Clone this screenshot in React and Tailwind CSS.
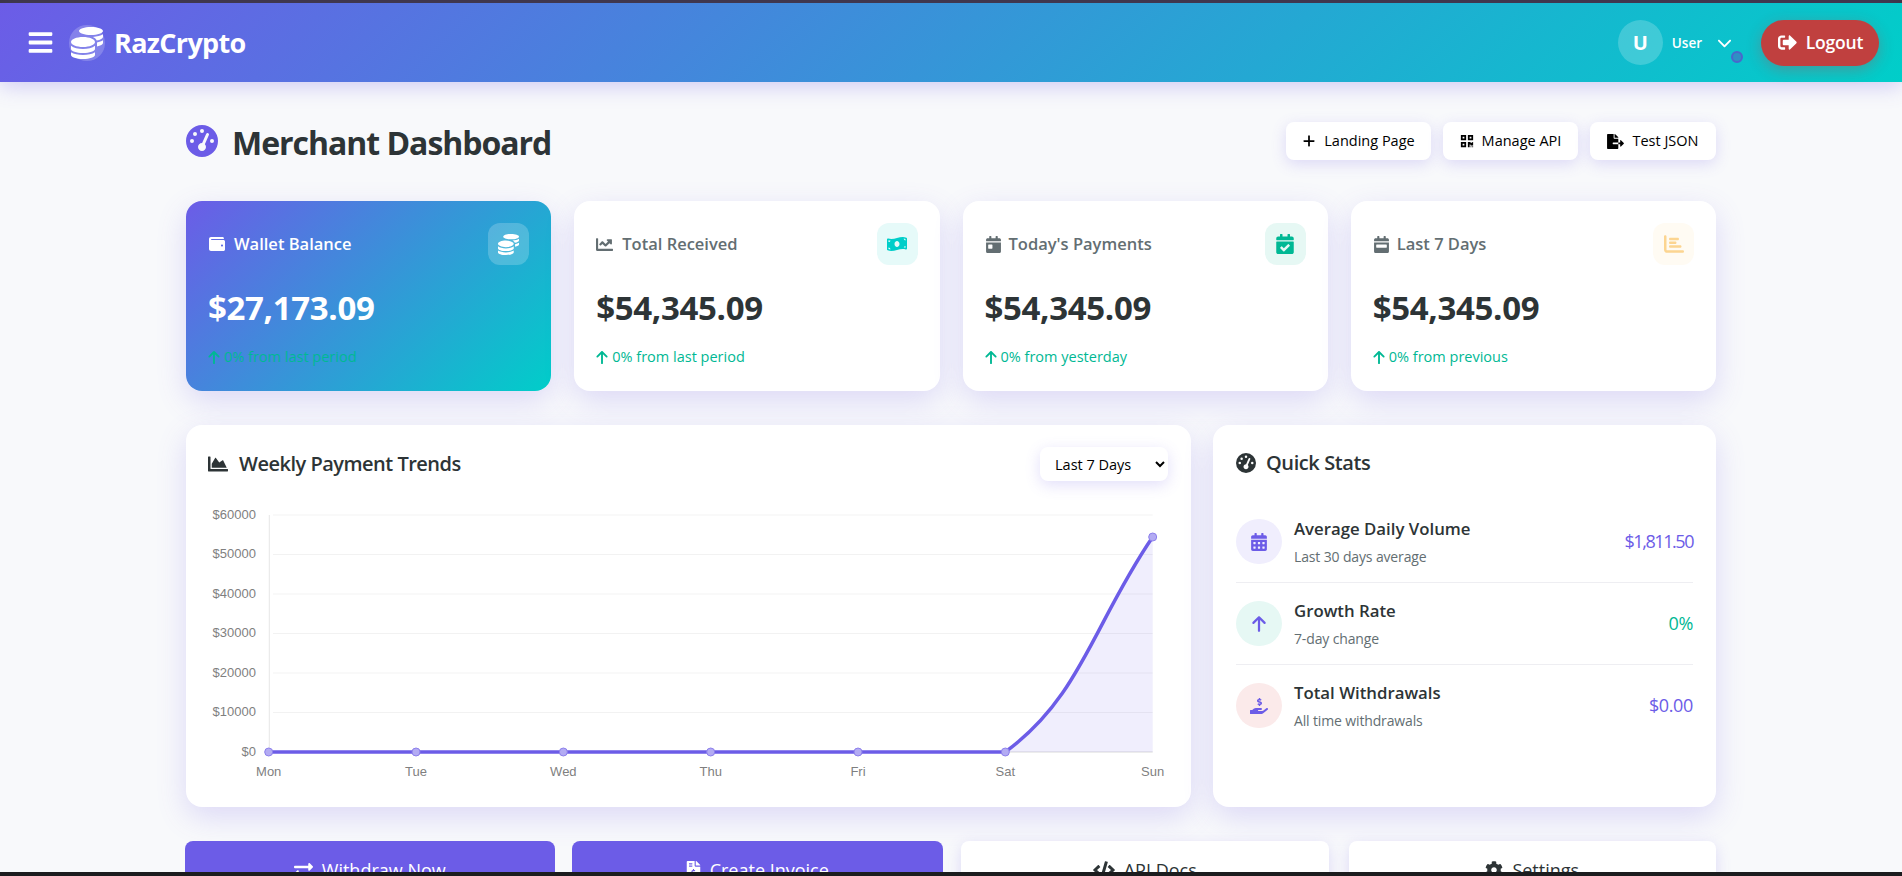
import { FaBars, FaCoins, FaSignOutAlt, FaQrcode, FaFileExport, FaWallet, FaChartLine, FaMoneyBillWave, FaCalendarDay, FaCalendarCheck, FaCalendarWeek, FaChartArea, FaCalendarAlt, FaHandHoldingUsd, FaExchangeAlt, FaFileInvoiceDollar, FaCode, FaCog } from 'react-icons/fa'
import { FaArrowUp, FaChevronDown, FaGaugeHigh, FaPlus, FaChartBar } from 'react-icons/fa6'

const statCards = [
  { label: "Total Received", Icon: FaChartLine, gap: 'gap-[9px]', BoxIcon: FaMoneyBillWave, box: 'bg-[#e6faf9] text-[#00cec9]', value: '$54,345.09', note: '0% from last period' },
  { label: "Today's Payments", Icon: FaCalendarDay, gap: 'gap-[7px]', BoxIcon: FaCalendarCheck, box: 'bg-[#e6f8f4] text-[#00b894]', value: '$54,345.09', note: '0% from yesterday' },
  { label: 'Last 7 Days', Icon: FaCalendarWeek, gap: 'gap-[7px]', BoxIcon: FaChartBar, box: 'bg-[#fffbf3] text-[#fcd591]', value: '$54,345.09', note: '0% from previous' },
]

const quickStats = [
  { title: 'Average Daily Volume', sub: 'Last 30 days average', value: '$1,811.50', Icon: FaCalendarAlt, circle: 'bg-[#f0eefd]', valueColor: 'text-[#6c5ce7] tracking-[-0.08em]' },
  { title: 'Growth Rate', sub: '7-day change', value: '0%', Icon: FaArrowUp, circle: 'bg-[#e6f8f4]', valueColor: 'text-[#00b894] tracking-[-0.02em]' },
  { title: 'Total Withdrawals', sub: 'All time withdrawals', value: '$0.00', Icon: FaHandHoldingUsd, circle: 'bg-[#fbeaea]', valueColor: 'text-[#6c5ce7] tracking-[-0.02em]' },
]

const days = ['Mon', 'Tue', 'Wed', 'Thu', 'Fri', 'Sat', 'Sun']
const yTicks = ['$60000', '$50000', '$40000', '$30000', '$20000', '$10000', '$0']

function TrendChart() {
  const xs = days.map((_, i) => 268.7 + i * 147.33)
  return (
    <svg viewBox="208 500 960 290" className="block w-[960px] h-[290px] mt-[19px] overflow-visible">
      {yTicks.map((t, i) => {
        const y = 515 + i * 39.5
        return (
          <g key={t}>
            <line x1="273" x2="1152.7" y1={y} y2={y} stroke="rgba(0,0,0,0.05)" />
            <text x="256" y={y + 3.5} textAnchor="end" fontSize="13" fill="#7f7f7f" fontFamily="Liberation Sans, sans-serif">{t}</text>
          </g>
        )
      })}
      <line x1="269.3" x2="269.3" y1="515" y2="752" stroke="rgba(0,0,0,0.1)" />
      <line x1="269.3" x2="1152.7" y1="752" y2="752" stroke="rgba(0,0,0,0.1)" />
      <path d="M1005.3 752C1080.8 697 1093.7 623 1152.7 537V752Z" fill="rgba(108,92,231,0.1)" />
      <path d="M268.7 752H1005.3C1080.8 697 1093.7 623 1152.7 537" fill="none" stroke="#6c5ce7" strokeWidth="3.5" />
      {xs.map((x, i) => (
        <g key={days[i]}>
          <circle cx={x} cy={i === 6 ? 537 : 752} r="4" fill="#b3abf3" stroke="#8d80ec" strokeWidth="1" />
          <text x={x} y="775.5" textAnchor="middle" fontSize="13" fill="#7f7f7f" fontFamily="Liberation Sans, sans-serif">{days[i]}</text>
        </g>
      ))}
    </svg>
  )
}

export default function App() {
  return (
    <div className="h-screen overflow-hidden flex flex-col bg-[#f8f9fb] font-['Open_Sans','Noto_Sans',sans-serif] text-[#2d3436]">
      <div className="h-[3px] shrink-0 bg-[#3b3440]"></div>

      {/* Header */}
      <header className="h-[79px] shrink-0 flex items-center justify-between pl-[27px] pr-[23px] text-white bg-[linear-gradient(135deg,#6c5ce7,#00cec9)] shadow-[0_4px_20px_rgba(108,92,231,0.3)] relative z-10">
        <div className="flex items-center">
          <FaBars className="w-[27px] h-[27px]" />
          <div className="w-9 h-9 ml-[15px] rounded-full bg-white/20 flex items-center justify-center">
            <FaCoins className="w-[32px] h-[32px]" />
          </div>
          <span className="ml-[9px] mt-[1px] text-[27px] font-bold tracking-[-0.025em]">RazCrypto</span>
        </div>
        <div className="flex items-center">
          <div className="w-[45px] h-[45px] rounded-full bg-white/20 flex items-center justify-center text-[20px] font-bold">U</div>
          <span className="ml-[9px] mt-[1px] text-[13.5px] font-semibold">User</span>
          <div className="relative ml-[15px]">
            <FaChevronDown className="w-[15px] h-[15px]" />
            <span className="absolute left-[14px] top-[16px] w-3 h-3 rounded-full border-2 border-[#4a66cc] bg-[#2f8fc4]"></span>
          </div>
          <button className="ml-[29px] h-[46px] w-[118px] rounded-full bg-[#c0403f] shadow-[0_4px_15px_rgba(214,48,49,0.3)] flex items-center justify-center gap-[8px] text-[17.5px] font-semibold tracking-[-0.01em]">
            <FaSignOutAlt className="w-[21px] h-[19px]" />
            Logout
          </button>
        </div>
      </header>

      <main className="flex-1 overflow-hidden">
        <div className="w-[1530px] mx-auto pt-[40px]">
          {/* Title row */}
          <div className="flex items-center justify-between h-[38px] mb-[41px]">
            <div className="flex items-center">
              <FaGaugeHigh className="w-8 h-8 text-[#6c5ce7]" />
              <h1 className="ml-[14px] mt-[4px] text-[32px] font-bold tracking-[-0.032em]">Merchant Dashboard</h1>
            </div>
            <div className="flex gap-3 text-[14.5px] text-black">
              <button className="h-[38px] w-[145px] bg-white rounded-lg shadow-[0_4px_15px_rgba(108,92,231,0.2)] flex items-center justify-center gap-[8px]"><FaPlus className="w-[14px] h-[14px]" />Landing Page</button>
              <button className="h-[38px] w-[135px] bg-white rounded-lg shadow-[0_4px_15px_rgba(108,92,231,0.2)] flex items-center justify-center gap-[8px]"><FaQrcode className="w-[14px] h-[14px]" />Manage API</button>
              <button className="h-[38px] w-[126px] bg-white rounded-lg shadow-[0_4px_15px_rgba(108,92,231,0.2)] flex items-center justify-center gap-[8px]"><FaFileExport className="w-[17px] h-[15px]" />Test JSON</button>
            </div>
          </div>

          {/* Stat cards */}
          <div className="grid grid-cols-4 gap-[23px] mb-[34px]">
            <div className="h-[190px] rounded-2xl p-[22px] text-white bg-[linear-gradient(135deg,#6c5ce7,#00cec9)] shadow-[0_10px_30px_rgba(108,92,231,0.2)]">
              <div className="flex items-center justify-between h-[42px]">
                <div className="flex items-center gap-[8px] text-[16.5px] font-semibold"><FaWallet className="w-[18px] h-[16px]" />Wallet Balance</div>
                <div className="w-[41px] h-[42px] rounded-xl bg-white/20 flex items-center justify-center"><FaCoins className="w-[21px] h-[21px]" /></div>
              </div>
              <div className="mt-[24px] h-[38px] leading-[38px] text-[33px] font-bold tracking-[-0.01em]">$27,173.09</div>
              <div className="mt-[20px] h-[20px] flex items-center gap-[4px] text-[14.5px] text-[#00b894]"><FaArrowUp className="w-[12px] h-[15px]" />0% from last period</div>
            </div>
            {statCards.map(({ label, Icon, gap, BoxIcon, box, value, note }) => (
              <div key={label} className="h-[190px] rounded-2xl p-[22px] bg-white shadow-[0_10px_30px_rgba(108,92,231,0.2)]">
                <div className="flex items-center justify-between h-[42px]">
                  <div className={`flex items-center text-[16.5px] font-semibold text-[#636e72] ${gap}`}><Icon className="w-[17px] h-[17px]" />{label}</div>
                  <div className={`w-[41px] h-[42px] rounded-xl flex items-center justify-center ${box}`}><BoxIcon className="w-[20px] h-[20px]" /></div>
                </div>
                <div className="mt-[24px] h-[38px] leading-[38px] text-[33px] font-bold tracking-[-0.01em]">{value}</div>
                <div className="mt-[20px] h-[20px] flex items-center gap-[4px] text-[14.5px] text-[#00b894]"><FaArrowUp className="w-[12px] h-[15px]" />{note}</div>
              </div>
            ))}
          </div>

          {/* Chart + quick stats */}
          <div className="grid grid-cols-[1005px_503px] gap-[22px] mb-[34px]">
            <div className="h-[382px] rounded-2xl bg-white pt-[22px] pl-[22px] pr-[23px] shadow-[0_10px_30px_rgba(108,92,231,0.2)]">
              <div className="flex items-center justify-between h-[34px]">
                <h2 className="flex items-center gap-[11px] text-[20px] font-semibold tracking-[-0.025em]"><FaChartArea className="w-[20px] h-[20px]" />Weekly Payment Trends</h2>
                <select className="w-[128px] h-[34px] pl-[11px] rounded-lg bg-white text-[14.5px] text-black shadow-[0_4px_15px_rgba(108,92,231,0.2)]">
                  <option>Last 7 Days</option>
                </select>
              </div>
              <TrendChart />
            </div>

            <div className="h-[382px] rounded-2xl bg-white pt-[22px] pl-[23px] pr-[23px] shadow-[0_10px_30px_rgba(108,92,231,0.2)]">
              <h2 className="flex items-center gap-[10px] h-[32px] mb-[22px] text-[20px] font-semibold tracking-[-0.02em]"><FaGaugeHigh className="w-[20px] h-[20px]" />Quick Stats</h2>
              <div>
                {quickStats.map(({ title, sub, value, Icon, circle, valueColor }, i) => (
                  <div key={title} className={`flex items-center py-[18px] ${i < 2 ? 'border-b border-[#eeeef2]' : ''}`}>
                    <div className={`w-[46px] h-[45px] rounded-full flex items-center justify-center ${circle}`}><Icon className="w-[18px] h-[18px] text-[#6c5ce7]" /></div>
                    <div className="ml-[12px] h-[45px]">
                      <div className="h-[20px] leading-[20px] text-[16.8px] font-semibold">{title}</div>
                      <div className="mt-[9px] h-[18px] leading-[18px] text-[14px] tracking-[-0.01em] text-[#636e72]">{sub}</div>
                    </div>
                    <div className={`ml-auto text-[18px] font-medium ${valueColor}`}>{value}</div>
                  </div>
                ))}
              </div>
            </div>
          </div>

          {/* Action buttons */}
          <div className="grid grid-cols-4 gap-5">
            <button className="-mx-[1px] h-[58px] rounded-lg bg-[#6c5ce7] text-white flex items-center justify-center gap-[9px] text-[18px] font-medium"><FaExchangeAlt className="w-[19px] h-[19px]" />Withdraw Now</button>
            <button className="-mx-[1.5px] h-[58px] rounded-lg bg-[#6c5ce7] text-white flex items-center justify-center gap-[9px] text-[18px] font-medium"><FaFileInvoiceDollar className="w-[15px] h-[18px]" />Create Invoice</button>
            <button className="h-[58px] rounded-lg bg-white flex items-center justify-center gap-[9px] text-[18px] font-medium shadow-[0_4px_15px_rgba(108,92,231,0.2)]"><FaCode className="w-[22px] h-[18px]" />API Docs</button>
            <button className="h-[58px] rounded-lg bg-white flex items-center justify-center gap-[9px] text-[18px] font-medium shadow-[0_4px_15px_rgba(108,92,231,0.2)]"><FaCog className="w-[18px] h-[18px]" />Settings</button>
          </div>
        </div>
      </main>

      <div className="h-[4px] shrink-0 bg-[#1c1c1e] relative z-10"></div>
    </div>
  )
}
